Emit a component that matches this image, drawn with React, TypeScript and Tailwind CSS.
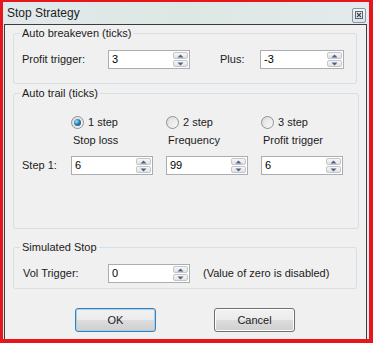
import React from "react";

function Arrow({ up }: { up: boolean }) {
  return (
    <svg width="7" height="4" viewBox="0 0 7 4" className="block">
      {up ? <path d="M0.5 3.5 L3.5 0.5 L6.5 3.5 Z" fill="#4d6185" /> : <path d="M0.5 0.5 L3.5 3.5 L6.5 0.5 Z" fill="#4d6185" />}
    </svg>
  );
}

function Spin({ value, w }: { value: string; w: string }) {
  return (
    <div className={`${w} h-[19px] border border-[#abadb3] bg-white flex items-stretch shrink-0`}>
      <div className="flex-1 pl-[3px] text-[11px] leading-[16px] text-black">{value}</div>
      <div className="w-[16px] flex flex-col py-[1px] pr-[1px] gap-[1px]">
        <div className="flex-1 border border-[#c3c7cb] rounded-[2px] bg-gradient-to-b from-[#f7f7f7] to-[#e2e2e2] flex items-center justify-center">
          <Arrow up />
        </div>
        <div className="flex-1 border border-[#c3c7cb] rounded-[2px] bg-gradient-to-b from-[#f7f7f7] to-[#e2e2e2] flex items-center justify-center">
          <Arrow up={false} />
        </div>
      </div>
    </div>
  );
}

function Radio({ checked, label }: { checked?: boolean; label: string }) {
  return (
    <div className="w-[95px] flex items-center h-[15px]">
      <div className="w-[13px] h-[13px] rounded-full border border-[#8f9294] bg-gradient-to-br from-[#d8d8d8] to-[#fafafa] flex items-center justify-center shrink-0">
        {checked ? (
          <div className="w-[7px] h-[7px] rounded-full bg-[radial-gradient(circle_at_35%_35%,#9ee3ff_0%,#2a86b4_45%,#0c3c58_100%)]" />
        ) : (
          <div className="w-[7px] h-[7px] rounded-full bg-gradient-to-br from-[#e4e4e4] to-[#f4f4f4]" />
        )}
      </div>
      <span className="ml-[4px]">{label}</span>
    </div>
  );
}

export default function App() {
  return (
    <div className="w-[373px] h-[343px] border-solid border-[#e5161c] border-t-2 border-l-[3px] border-r-4 border-b-4 bg-[#e4eaed] flex flex-col font-['Liberation_Sans',Arial,sans-serif] text-[11px] text-[#1b1b1b]">
      <div className="h-[22px] flex items-center pl-[4px] pr-[3px] shrink-0 bg-gradient-to-r from-[#e2e9ec] via-[#dde8e4] to-[#e4eaed]">
        <span className="text-[12px] leading-[16px] text-[#222]">Stop Strategy</span>
        <div className="ml-auto mt-[4px] w-[14px] h-[15px] rounded-[2px] border border-[#8a97a3] bg-gradient-to-b from-[#f3f5f7] to-[#dbe2e8] flex items-center justify-center">
          <svg width="8" height="8" viewBox="0 0 8 8">
            <rect x="0.5" y="0.5" width="7" height="7" fill="none" stroke="#5a6470" strokeWidth="1" />
            <path d="M2 2 L6 6 M6 2 L2 6" stroke="#3a4550" strokeWidth="1.2" />
          </svg>
        </div>
      </div>
      <div className="flex-1 ml-[1px] mr-[2px] border border-[#3c3c3c] border-b-0 bg-[#f0f0f0] flex flex-col">
        <fieldset className="ml-[8px] w-[344px] h-[58px] mt-[1px] border border-[#d5dfe5] rounded-[3px]">
          <legend className="ml-[6px] px-[2px] leading-[15px]">Auto breakeven (ticks)</legend>
          <div className="mt-[9px] pl-[8px] flex items-center h-[19px]">
            <span className="w-[86px]">Profit trigger:</span>
            <Spin value="3" w="w-[82px]" />
            <span className="ml-[30px] w-[40px]">Plus:</span>
            <Spin value="-3" w="w-[84px]" />
          </div>
        </fieldset>
        <fieldset className="ml-[8px] w-[344px] h-[143px] mt-[2px] border border-[#d5dfe5] rounded-[3px]">
          <legend className="ml-[6px] px-[2px] leading-[15px]">Auto trail (ticks)</legend>
          <div className="mt-[14px] pl-[57px] flex">
            <Radio checked label="1 step" />
            <Radio label="2 step" />
            <Radio label="3 step" />
          </div>
          <div className="mt-[3px] pl-[59px] flex h-[15px] items-center">
            <span className="w-[95px]">Stop loss</span>
            <span className="w-[95px]">Frequency</span>
            <span className="w-[95px]">Profit trigger</span>
          </div>
          <div className="mt-[8px] pl-[8px] flex items-center h-[19px]">
            <span className="w-[49px]">Step 1:</span>
            <Spin value="6" w="w-[82px]" />
            <div className="w-[13px]" />
            <Spin value="99" w="w-[82px]" />
            <div className="w-[13px]" />
            <Spin value="6" w="w-[82px]" />
          </div>
        </fieldset>
        <fieldset className="ml-[8px] w-[344px] h-[49px] mt-[11px] border border-[#d5dfe5] rounded-[3px]">
          <legend className="ml-[6px] px-[2px] leading-[15px]">Simulated Stop</legend>
          <div className="mt-[9px] pl-[9px] flex items-center h-[19px]">
            <span className="w-[85px]">Vol Trigger:</span>
            <Spin value="0" w="w-[82px]" />
            <span className="ml-[13px]">(Value of zero is disabled)</span>
          </div>
        </fieldset>
        <div className="mt-[19px] flex">
          <button className="ml-[70px] w-[81px] h-[24px] rounded-[3px] border border-[#3c7fb1] bg-[linear-gradient(#f2f2f2_0%,#ebebeb_50%,#dddddd_50%,#cfcfcf_100%)] shadow-[inset_0_0_0_1px_#9fd3f2] text-[11px] text-[#1b1b1b]">
            OK
          </button>
          <button className="ml-[58px] w-[81px] h-[24px] rounded-[3px] border border-[#707070] bg-[linear-gradient(#f2f2f2_0%,#ebebeb_50%,#dddddd_50%,#cfcfcf_100%)] shadow-[inset_0_0_0_1px_#fcfcfc] text-[11px] text-[#1b1b1b]">
            Cancel
          </button>
        </div>
      </div>
    </div>
  );
}
